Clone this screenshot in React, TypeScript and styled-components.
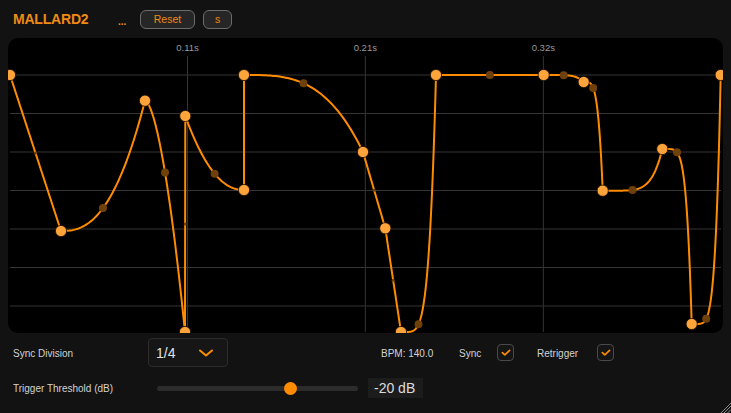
import React from "react";
import styled, { createGlobalStyle } from "styled-components";

const GlobalStyle = createGlobalStyle`
  html, body {
    margin: 0;
    padding: 0;
    background: #121212;
  }
  body {
    font-family: "Liberation Sans", Arial, sans-serif;
  }
`;

const ORANGE = "#ff8c00";
const TEXT_ORANGE = "#f08a12";

const Shell = styled.div`
  position: relative;
  width: 731px;
  height: 413px;
  background: #121212;
  overflow: hidden;
  color: #d2d2d2;
  font-size: 10px;
`;

const Header = styled.div`
  display: flex;
  align-items: center;
  height: 38px;
  padding-left: 13px;
  box-sizing: border-box;
`;

const Title = styled.div`
  width: 105px;
  font-size: 14px;
  font-weight: bold;
  color: ${TEXT_ORANGE};
  letter-spacing: -0.2px;
`;

const Dots = styled.div`
  width: 22px;
  padding-top: 4px;
  font-size: 10px;
  font-weight: bold;
  color: ${TEXT_ORANGE};
`;

const HeadButton = styled.button<{ $w: number }>`
  width: ${({ $w }) => $w}px;
  height: 19px;
  margin-right: 8px;
  padding: 0;
  border: 1px solid #6c6c6c;
  border-radius: 6px;
  background: #262626;
  color: ${TEXT_ORANGE};
  font-family: "Liberation Sans", Arial, sans-serif;
  font-size: 10.5px;
`;

const GraphPanel = styled.div`
  margin: 0 8px;
  width: 715px;
  height: 295px;
  background: #000;
  border-radius: 10px;
  overflow: hidden;
`;

const Row = styled.div<{ $h: number; $top: number }>`
  display: flex;
  align-items: center;
  height: ${({ $h }) => $h}px;
  margin-top: ${({ $top }) => $top}px;
  padding-left: 13px;
`;

const Label = styled.div<{ $w: number; $ml?: number }>`
  width: ${({ $w }) => $w}px;
  margin-left: ${({ $ml }) => $ml ?? 0}px;
  padding-top: 1px;
  flex-shrink: 0;
  font-size: 10px;
  color: #d2d2d2;
  white-space: nowrap;
`;

const Dropdown = styled.div`
  display: flex;
  align-items: center;
  justify-content: space-between;
  width: 80px;
  height: 29px;
  box-sizing: border-box;
  padding: 0 14px 0 7px;
  background: #161616;
  border: 1px solid #2c2c2c;
  border-radius: 4px;
  font-size: 14px;
  color: #e2e2e2;
`;

const CheckBox = styled.div`
  display: flex;
  align-items: center;
  justify-content: center;
  width: 17px;
  height: 17px;
  box-sizing: border-box;
  border: 1px solid #4a4a4a;
  border-radius: 4px;
  background: #151515;
  flex-shrink: 0;
`;

const SliderTrack = styled.div`
  position: relative;
  width: 201px;
  height: 5px;
  border-radius: 3px;
  background: #2c2c2c;
  flex-shrink: 0;
`;

const SliderThumb = styled.div`
  position: absolute;
  top: 50%;
  width: 13px;
  height: 13px;
  margin: -6.5px 0 0 -6.5px;
  border-radius: 50%;
  background: ${ORANGE};
`;

const ValueBox = styled.div`
  display: flex;
  align-items: center;
  width: 55px;
  height: 20px;
  margin-left: 10px;
  padding-left: 6px;
  box-sizing: border-box;
  background: #1c1c1c;
  font-size: 14px;
  color: #dcdcdc;
`;

const Grip = styled.svg`
  position: absolute;
  right: 0;
  bottom: 0;
`;

type Pt = [number, number];
type Seg = { to: Pt; fc: number; dot: number };

// shape points in page pixels; fc = how far the curve has travelled at the half-way mark
const START: Pt = [10, 75];
const SEGMENTS: Seg[] = [
  { to: [61, 231], fc: 0.5, dot: 1.5 },
  { to: [145, 100.7], fc: 0.176, dot: 4 },
  { to: [185, 332], fc: 0.31, dot: 4 },
  { to: [185.3, 116], fc: 0.5, dot: 1.5 },
  { to: [244, 190], fc: 0.78, dot: 4 },
  { to: [244, 75], fc: 0.5, dot: 0 },
  { to: [363, 152], fc: 0.108, dot: 4 },
  { to: [385.3, 228.3], fc: 0.5, dot: 1.5 },
  { to: [401, 332], fc: 0.5, dot: 1.5 },
  { to: [436, 75], fc: 0.03, dot: 4 },
  { to: [543.7, 75], fc: 0.5, dot: 4 },
  { to: [583.7, 82], fc: 0.02, dot: 4 },
  { to: [602.7, 190.7], fc: 0.055, dot: 4 },
  { to: [662.3, 149], fc: 0.017, dot: 4 },
  { to: [691.7, 324], fc: 0.019, dot: 4 },
  { to: [720.7, 75], fc: 0.021, dot: 4 },
];

const shape = (t: number, fc: number) => {
  if (Math.abs(fc - 0.5) < 0.001) return t;
  if (fc < 0.5) return Math.pow(t, Math.log(fc) / Math.log(0.5));
  return 1 - Math.pow(1 - t, Math.log(1 - fc) / Math.log(0.5));
};

const buildCurve = () => {
  let from = START;
  let d = `M${from[0]} ${from[1]}`;
  const dots: { x: number; y: number; r: number }[] = [];
  const points: Pt[] = [START];
  SEGMENTS.forEach((s) => {
    const [x0, y0] = from;
    const [x1, y1] = s.to;
    const steps = Math.abs(x1 - x0) < 1 ? 1 : 60;
    for (let i = 1; i <= steps; i++) {
      const t = i / steps;
      const x = x0 + (x1 - x0) * t;
      const y = y0 + (y1 - y0) * shape(t, s.fc);
      d += ` L${x.toFixed(2)} ${y.toFixed(2)}`;
    }
    if (s.dot > 0) {
      dots.push({
        x: (x0 + x1) / 2,
        y: y0 + (y1 - y0) * s.fc,
        r: s.dot,
      });
    }
    points.push(s.to);
    from = s.to;
  });
  return { d, dots, points };
};

const TIME_MARKS = [
  { x: 187.5, label: "0.11s" },
  { x: 365.3, label: "0.21s" },
  { x: 543.3, label: "0.32s" },
];

const EnvelopeGraph = () => {
  const { d, dots, points } = buildCurve();
  const rows = Array.from({ length: 7 }, (_, i) => 75 + i * 38.5);

  return (
    <svg width="715" height="295" viewBox="8 38 715 295">
      {rows.map((y) => (
        <line key={y} x1={10} x2={721} y1={y} y2={y} stroke="#353535" strokeWidth={1} />
      ))}
      {TIME_MARKS.map((m) => (
        <g key={m.label}>
          <line x1={m.x} x2={m.x} y1={56} y2={332} stroke="#353535" strokeWidth={1} />
          <text
            x={m.x}
            y={51}
            textAnchor="middle"
            fontSize="9.5"
            fill="#9a9a9a"
            fontFamily="'Liberation Sans', Arial, sans-serif"
          >
            {m.label}
          </text>
        </g>
      ))}
      <path d={d} fill="none" stroke={ORANGE} strokeWidth={2} strokeLinejoin="round" />
      {dots.map((p, i) => (
        <circle key={i} cx={p.x} cy={p.y} r={p.r} fill="#70400a" />
      ))}
      {points.map(([x, y], i) => (
        <circle key={i} cx={x} cy={y} r={5.6} fill="#ffa43a" stroke="#1a0d00" strokeWidth={0.8} />
      ))}
    </svg>
  );
};

const CheckMark = () => (
  <svg width="15" height="15" viewBox="0 0 15 15">
    <polyline
      points="4.3,7.6 6.8,9.8 11.6,5.4"
      fill="none"
      stroke={ORANGE}
      strokeWidth={1.7}
      strokeLinecap="round"
      strokeLinejoin="round"
    />
  </svg>
);

const Chevron = () => (
  <svg width="14" height="8" viewBox="0 0 14 8">
    <polyline
      points="1,1.5 7,6.5 13,1.5"
      fill="none"
      stroke={ORANGE}
      strokeWidth={2}
      strokeLinecap="round"
      strokeLinejoin="round"
    />
  </svg>
);

const App = () => {
  const threshold = -20;
  const min = -60;
  const max = 0;
  const frac = (threshold - min) / (max - min);
  const thumbLeft = 8 + frac * (201 - 13);

  return (
    <>
      <GlobalStyle />
      <Shell>
        <Header>
          <Title>MALLARD2</Title>
          <Dots>...</Dots>
          <HeadButton $w={55}>Reset</HeadButton>
          <HeadButton $w={29}>s</HeadButton>
        </Header>

        <GraphPanel>
          <EnvelopeGraph />
        </GraphPanel>

        <Row $h={29} $top={5}>
          <Label $w={135}>Sync Division</Label>
          <Dropdown>
            <span>1/4</span>
            <Chevron />
          </Dropdown>
          <Label $w={78} $ml={153}>BPM: 140.0</Label>
          <Label $w={38}>Sync</Label>
          <CheckBox>
            <CheckMark />
          </CheckBox>
          <Label $w={60} $ml={23}>Retrigger</Label>
          <CheckBox>
            <CheckMark />
          </CheckBox>
        </Row>

        <Row $h={20} $top={11}>
          <Label $w={144}>Trigger Threshold (dB)</Label>
          <SliderTrack>
            <SliderThumb style={{ left: thumbLeft }} />
          </SliderTrack>
          <ValueBox>{threshold} dB</ValueBox>
        </Row>

        <Grip width="11" height="11" viewBox="0 0 11 11">
          <line x1="1" y1="11" x2="11" y2="1" stroke="#8a8a8a" strokeWidth="1" />
          <line x1="4" y1="11" x2="11" y2="4" stroke="#8a8a8a" strokeWidth="1" />
          <line x1="7.5" y1="11" x2="11" y2="7.5" stroke="#8a8a8a" strokeWidth="1" />
        </Grip>
      </Shell>
    </>
  );
};

export default App;
